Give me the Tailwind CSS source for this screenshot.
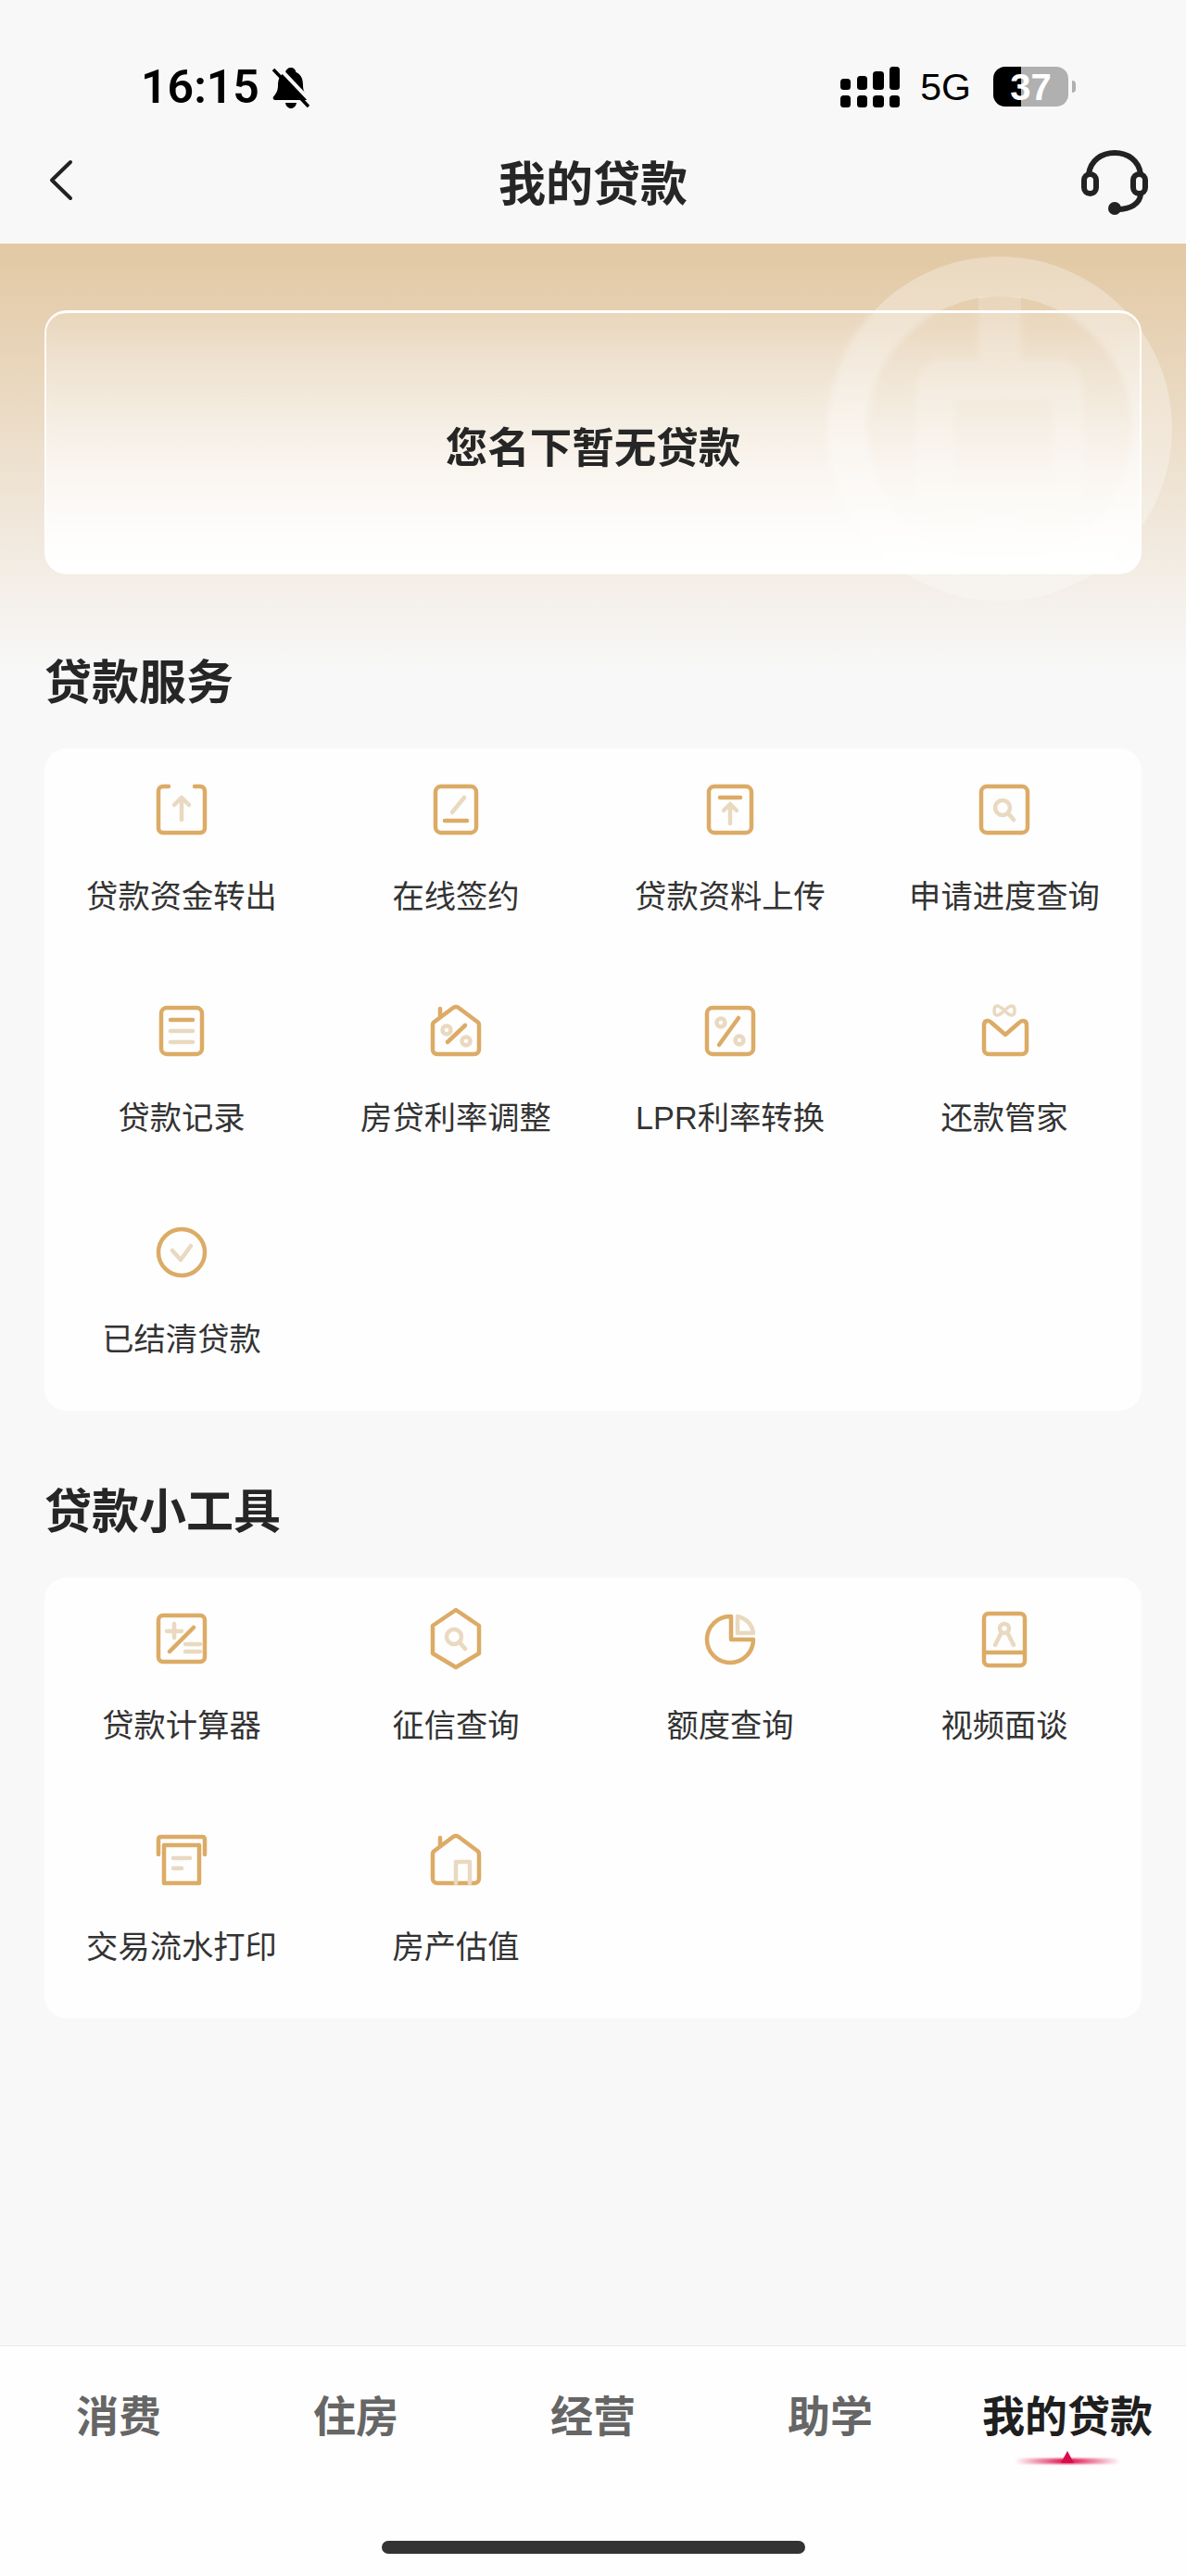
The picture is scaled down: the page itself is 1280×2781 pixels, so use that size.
<!DOCTYPE html>
<html lang="zh-CN">
<head>
    <meta charset="UTF-8">
    <meta name="viewport" content="width=device-width, initial-scale=1.0">
    <title>我的贷款</title>
    <script src="https://cdn.jsdelivr.net/npm/@tailwindcss/browser@4"></script>
</head>
<body class="bg-[#f8f8f8]">
<div class="relative flex flex-col w-[1280px] h-[2781px] overflow-hidden bg-[#f8f8f8] text-[#333] font-['Noto_Sans_CJK_SC','Liberation_Sans',sans-serif]">

    <!-- Status bar -->
    <div class="flex justify-between h-[134px] pl-[152px] pr-[119px] pt-[72px] text-black">
        <div class="flex items-start gap-[14px]">
            <span class="text-[50px] leading-[44px] font-semibold font-['Roboto',sans-serif]">16:15</span>
            <svg class="mt-[1px]" width="40" height="44" viewBox="0 0 40 44">
                <path d="M20 0c3 0 5 2 5.500 5 6 2.500 7.500 8 7.500 14 0 6 2 9 5 12.500 1 1.500 0 3.500-2 3.500H3c-2 0-3-2-2-3.500C4 28 6 25 6 19c0-6 2-11.500 8-14C14.500 2 17 0 20 0z"/>
                <path d="M14 38h12c-.500 3.500-3 6-6 6s-5.500-2.500-6-6z"/>
                <path d="M6 -1L44 39" stroke="#f8f8f8" stroke-width="4"/>
                <path d="M1 2L39 42" stroke="#000" stroke-width="3.500"/>
            </svg>
        </div>
        <div class="flex items-start">
            <svg class="w-[64px] h-[44px]" viewBox="0 0 64 44">
                <rect x="0" y="13" width="11" height="12" rx="3.500"/>
                <rect x="18" y="10" width="11" height="15" rx="3.500"/>
                <rect x="35" y="5" width="12" height="20" rx="3.500"/>
                <rect x="53" y="0" width="11" height="25" rx="3.500"/>
                <rect x="0" y="31" width="11" height="13" rx="3.500"/>
                <rect x="18" y="31" width="11" height="13" rx="3.500"/>
                <rect x="35" y="31" width="12" height="13" rx="3.500"/>
                <rect x="53" y="31" width="11" height="13" rx="3.500"/>
            </svg>
            <span class="ml-[22px] text-[41px] leading-[44px] font-['Liberation_Sans',sans-serif]">5G</span>
            <div class="relative ml-[24px] flex items-center justify-center w-[81px] h-[43px] rounded-[13px] overflow-hidden bg-[#b0b0b0]">
                <div class="absolute left-0 top-0 bottom-0 w-[30px] bg-black"></div>
                <span class="relative text-white text-[40px] leading-none font-bold font-['Liberation_Sans',sans-serif]">37</span>
            </div>
            <div class="ml-[4px] mt-[15px] w-[4px] h-[13px] rounded-r-full bg-[#b0b0b0]"></div>
        </div>
    </div>

    <!-- Header -->
    <div class="relative flex items-center justify-center h-[129px] pb-[8px]">
        <svg class="absolute left-[52px] top-[38px]" width="27" height="45" viewBox="0 0 27 45" fill="none" stroke="#222" stroke-width="4" stroke-linecap="round" stroke-linejoin="round">
            <path d="M24 3L4 22.500 24 42"/>
        </svg>
        <h1 class="text-[51px] leading-[60px] font-bold text-[#262626]">我的贷款</h1>
        <svg class="absolute left-[1166px] top-[28px]" width="74" height="70" viewBox="0 0 74 70" fill="none" stroke="#222" stroke-width="6" stroke-linecap="round">
            <path d="M9 26C11 11 23 3 37 3s26 8 28 23"/>
            <rect x="4" y="26" width="13" height="21" rx="6.500"/>
            <rect x="57" y="26" width="13" height="21" rx="6.500"/>
            <path d="M65 48c-1 10-11 16-25 16"/>
            <circle cx="37" cy="63" r="4" fill="#222"/>
        </svg>
    </div>

    <!-- Main -->
    <div class="relative flex flex-col px-12 pt-[72px]">
        <div class="absolute left-0 right-0 top-0 h-[460px] bg-linear-to-b from-[#e2c8a3] to-[#f8f8f8]"></div>
        <svg class="absolute left-[893px] top-[14px]" width="372" height="372" viewBox="0 0 372 372" fill="#fff">
            <path fill-opacity=".3" fill-rule="evenodd" d="M186 0a186 186 0 1 0 0 372a186 186 0 1 0 0-372zM186 43a143 143 0 1 1 0 286a143 143 0 1 1 0-286z"/>
            <path fill-opacity=".18" fill-rule="evenodd" d="M163 43h46v67h37a30 30 0 0 1 30 30v105a30 30 0 0 1-30 30h-37v54h-46v-54h-37a30 30 0 0 1-30-30V140a30 30 0 0 1 30-30h37zM137 156v88h107v-88z"/>
        </svg>

        <div class="relative flex items-center justify-center h-[285px] pt-[4px] rounded-[24px] border-2 border-t-[3px] border-white/85 backdrop-blur-[3px] bg-linear-to-b from-white/15 to-white">
            <span class="text-[45.500px] leading-[60px] font-bold text-[#262626]">您名下暂无贷款</span>
        </div>

        <h2 class="relative mt-[83px] text-[51px] leading-[60px] font-bold text-[#262626]">贷款服务</h2>

        <div class="relative mt-[45px] grid grid-cols-4 gap-y-[97px] pt-[39px] pb-[56px] rounded-[24px] bg-[#fefefe] text-[34.300px] leading-[48px]">
            <div class="flex flex-col items-center gap-[40px]">
                <svg class="overflow-visible" width="54" height="54" viewBox="0 0 54 54" fill="none" stroke-width="4.500" stroke-linecap="round" stroke-linejoin="round">
                    <path stroke="#dcab66" d="M13 2H7a5 5 0 0 0-5 5v40a5 5 0 0 0 5 5h40a5 5 0 0 0 5-5V7a5 5 0 0 0-5-5h-6"/>
                    <path stroke="#e9d9c0" d="M27 38V14M19 22l8-8 8 8"/>
                </svg>
                <span>贷款资金转出</span>
            </div>
            <div class="flex flex-col items-center gap-[40px]">
                <svg class="overflow-visible" width="54" height="54" viewBox="0 0 54 54" fill="none" stroke-width="4.500" stroke-linecap="round" stroke-linejoin="round">
                    <rect stroke="#dcab66" x="5" y="2" width="44" height="50" rx="6"/>
                    <path stroke="#e9d9c0" d="M36 14L23 30"/>
                    <path stroke="#dcab66" d="M15 39h24"/>
                </svg>
                <span>在线签约</span>
            </div>
            <div class="flex flex-col items-center gap-[40px]">
                <svg class="overflow-visible" width="54" height="54" viewBox="0 0 54 54" fill="none" stroke-width="4.500" stroke-linecap="round" stroke-linejoin="round">
                    <rect stroke="#dcab66" x="4" y="2" width="46" height="50" rx="6"/>
                    <path stroke="#dcab66" d="M16 14h22"/>
                    <path stroke="#e9d9c0" d="M27 42V22M20 28l7-7 7 7"/>
                </svg>
                <span>贷款资料上传</span>
            </div>
            <div class="flex flex-col items-center gap-[40px]">
                <svg class="overflow-visible" width="54" height="54" viewBox="0 0 54 54" fill="none" stroke-width="4.500" stroke-linecap="round" stroke-linejoin="round">
                    <rect stroke="#dcab66" x="2" y="2" width="50" height="50" rx="6"/>
                    <circle stroke="#e9d9c0" cx="25" cy="25" r="8"/>
                    <path stroke="#e9d9c0" d="M31 31l6 7"/>
                </svg>
                <span>申请进度查询</span>
            </div>

            <div class="flex flex-col items-center gap-[40px]">
                <svg class="overflow-visible" width="54" height="54" viewBox="0 0 54 54" fill="none" stroke-width="4.500" stroke-linecap="round" stroke-linejoin="round">
                    <rect stroke="#dcab66" x="5" y="2" width="44" height="50" rx="6"/>
                    <path stroke="#dcab66" d="M15 15h24"/>
                    <path stroke="#e9d9c0" d="M15 27h24M15 39h24"/>
                </svg>
                <span>贷款记录</span>
            </div>
            <div class="flex flex-col items-center gap-[40px]">
                <svg class="overflow-visible" width="54" height="54" viewBox="0 0 54 54" fill="none" stroke-width="4.500" stroke-linecap="round" stroke-linejoin="round">
                    <path stroke="#dcab66" d="M10 3v9M2 47V21q0-3 2-4L24 2q3-2 6 0l20 15q2 1 2 4v26a5 5 0 0 1-5 5H7a5 5 0 0 1-5-5z"/>
                    <path stroke="#dcab66" d="M37 21L18 39"/>
                    <circle stroke="#e9d9c0" cx="17" cy="26" r="4.500"/>
                    <circle stroke="#e9d9c0" cx="38" cy="38" r="4.500"/>
                </svg>
                <span>房贷利率调整</span>
            </div>
            <div class="flex flex-col items-center gap-[40px]">
                <svg class="overflow-visible" width="54" height="54" viewBox="0 0 54 54" fill="none" stroke-width="4.500" stroke-linecap="round" stroke-linejoin="round">
                    <rect stroke="#dcab66" x="2" y="2" width="50" height="50" rx="6"/>
                    <path stroke="#dcab66" d="M36 13L15 42"/>
                    <circle stroke="#e9d9c0" cx="17" cy="18" r="4.500"/>
                    <circle stroke="#e9d9c0" cx="37" cy="37" r="4.500"/>
                </svg>
                <span><span class="leading-none font-['Liberation_Sans',sans-serif]">LPR</span>利率转换</span>
            </div>
            <div class="flex flex-col items-center gap-[40px]">
                <svg class="overflow-visible" width="54" height="54" viewBox="0 0 54 54" fill="none" stroke-width="4.500" stroke-linecap="round" stroke-linejoin="round">
                    <path stroke="#dcab66" d="M5 21q0-5 4-5 2 0 4 2l15 13 15-13q2-2 4-2 4 0 4 5v26a5 5 0 0 1-5 5H10a5 5 0 0 1-5-5z"/>
                    <path stroke="#e9d9c0" stroke-width="3.500" d="M27 5c-3-3-6-5-8-5s-3 2-3 5 1 5 3 5 5-2 8-5zm0 0c3-3 6-5 8-5s3 2 3 5-1 5-3 5-5-2-8-5z"/>
                </svg>
                <span>还款管家</span>
            </div>

            <div class="flex flex-col items-center gap-[40px]">
                <svg class="overflow-visible" width="54" height="54" viewBox="0 0 54 54" fill="none" stroke-width="4.500" stroke-linecap="round" stroke-linejoin="round">
                    <circle stroke="#dcab66" cx="27" cy="27" r="25"/>
                    <path stroke="#e9d9c0" d="M17 25l9 10 11-15"/>
                </svg>
                <span>已结清贷款</span>
            </div>
        </div>

        <h2 class="relative mt-[75px] text-[51px] leading-[60px] font-bold text-[#262626]">贷款小工具</h2>

        <div class="relative mt-[45px] grid grid-cols-4 gap-y-[97px] pt-[39px] pb-[56px] rounded-[24px] bg-[#fefefe] text-[34.300px] leading-[48px]">
            <div class="flex flex-col items-center gap-[40px]">
                <svg class="overflow-visible" width="54" height="54" viewBox="0 0 54 54" fill="none" stroke-width="4.500" stroke-linecap="round" stroke-linejoin="round">
                    <rect stroke="#dcab66" x="2" y="2" width="50" height="50" rx="5"/>
                    <path stroke="#dcab66" d="M40 15L14 41"/>
                    <path stroke="#e9d9c0" d="M19 11v15M11 19h16M31 33h16M31 41h16"/>
                </svg>
                <span>贷款计算器</span>
            </div>
            <div class="flex flex-col items-center gap-[40px]">
                <svg class="overflow-visible" width="54" height="54" viewBox="0 0 54 54" fill="none" stroke-width="4.500" stroke-linecap="round" stroke-linejoin="round">
                    <path stroke="#dcab66" d="M27 -4L52 13V43L27 58 2 43V13z"/>
                    <circle stroke="#e9d9c0" cx="25" cy="25" r="8"/>
                    <path stroke="#e9d9c0" d="M31 31l6 7"/>
                </svg>
                <span>征信查询</span>
            </div>
            <div class="flex flex-col items-center gap-[40px]">
                <svg class="overflow-visible" width="54" height="54" viewBox="0 0 54 54" fill="none" stroke-width="4.500" stroke-linecap="round" stroke-linejoin="round">
                    <path stroke="#dcab66" d="M27 3A25 25 0 1 0 52 28H28V3"/>
                    <path stroke="#e9d9c0" d="M35 3q15 4 17 18H35z"/>
                </svg>
                <span>额度查询</span>
            </div>
            <div class="flex flex-col items-center gap-[40px]">
                <svg class="overflow-visible" width="54" height="54" viewBox="0 0 54 54" fill="none" stroke-width="4.500" stroke-linecap="round" stroke-linejoin="round">
                    <rect stroke="#dcab66" x="5" y="0" width="44" height="56" rx="5"/>
                    <path stroke="#dcab66" d="M5 42h44"/>
                    <circle stroke="#e9d9c0" cx="27" cy="16" r="5"/>
                    <path stroke="#e9d9c0" d="M23 22l-6 12M31 22l6 12"/>
                </svg>
                <span>视频面谈</span>
            </div>

            <div class="flex flex-col items-center gap-[40px]">
                <svg class="overflow-visible" width="54" height="54" viewBox="0 0 54 54" fill="none" stroke-width="4.500" stroke-linecap="round" stroke-linejoin="round">
                    <path stroke="#dcab66" d="M2 21V5q0-3 3-3h44q3 0 3 3v16"/>
                    <path stroke="#dcab66" d="M8 11h38v41H8z"/>
                    <path stroke="#e9d9c0" d="M18 25h18M18 36h9"/>
                </svg>
                <span>交易流水打印</span>
            </div>
            <div class="flex flex-col items-center gap-[40px]">
                <svg class="overflow-visible" width="54" height="54" viewBox="0 0 54 54" fill="none" stroke-width="4.500" stroke-linecap="round" stroke-linejoin="round">
                    <path stroke="#dcab66" d="M10 3v9M2 47V21q0-3 2-4L24 2q3-2 6 0l20 15q2 1 2 4v26a5 5 0 0 1-5 5H7a5 5 0 0 1-5-5z"/>
                    <path stroke="#e9d9c0" d="M27 52V29h15v23"/>
                </svg>
                <span>房产估值</span>
            </div>
        </div>
    </div>

    <!-- Bottom tabs -->
    <div class="absolute left-0 right-0 bottom-0 flex flex-col h-[249px] border-t border-[#e9e9e9] bg-[#fefefe]">
        <div class="grid grid-cols-5 pt-[42px] text-[46px] leading-[60px] font-bold text-[#666]">
            <div class="text-center">消费</div>
            <div class="text-center">住房</div>
            <div class="text-center">经营</div>
            <div class="text-center">助学</div>
            <div class="relative text-center whitespace-nowrap text-[#1f1f1f]">
                我的贷款
                <div class="absolute left-[71px] top-[79px] w-[114px] h-[6px] rounded-full blur-[1px] bg-linear-to-r from-[#dc0f4a]/0 via-[#dc0f4a] to-[#dc0f4a]/0"></div>
                <div class="absolute left-[121px] top-[71px] w-0 h-0 border-x-[7px] border-x-transparent border-b-[13px] border-b-[#d80c48]"></div>
            </div>
        </div>
        <div class="mt-auto mb-[24px] mx-auto w-[457px] h-[14px] rounded-full bg-[#333]"></div>
    </div>
</div>
</body>
</html>
